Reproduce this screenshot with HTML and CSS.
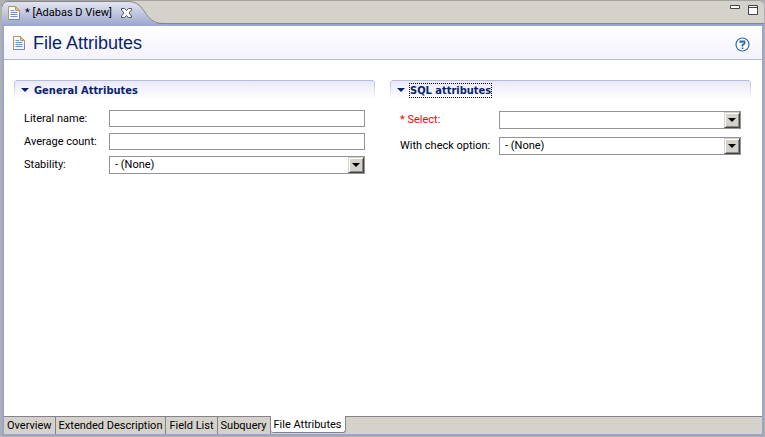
FILE: index.html
```html
<!DOCTYPE html>
<html lang="en">
<head>
<meta charset="utf-8">
<title>Adabas D View</title>
<link rel="stylesheet" href="styles.css">
</head>
<body>
<svg class="defs" aria-hidden="true">
  <symbol id="doc" viewBox="0 0 12 14">
    <path d="M.5.5h7l4 4v9H.5z" fill="#f4f7fd" stroke="#b59a55"/>
    <path d="M7.500.5v4h4z" fill="#e3c988" stroke="#b59a55"/>
    <path d="M2.500 4.500H6M2.500 6.500h7M2.500 8.500h7M2.500 10.500h7" stroke="#6d93c8" fill="none"/>
    <path d="M.5 13.500h11v-6" stroke="#7888ae" fill="none"/>
  </symbol>
  <symbol id="down" viewBox="0 0 8 4">
    <path d="M0 0h8L4 4z" fill="currentColor"/>
  </symbol>
</svg>
<div class="window">
  <header class="titlebar">
    <div class="editor-tab">
      <svg class="tab-shape" viewBox="0 0 163 25" aria-hidden="true">
        <defs>
          <linearGradient id="tabfill" x1="0" y1="0" x2="0" y2="1">
            <stop offset="0" stop-color="#e3e5ef"/>
            <stop offset="1" stop-color="#99a5cb"/>
          </linearGradient>
        </defs>
        <path d="M0 25V6Q1 1 6 1H126C145 1 141 23 161 23H163V25z" fill="url(#tabfill)"/>
        <path d="M0 6Q1 .5 6 .5H126C145 .5 141 22.500 161 22.500" fill="none" stroke="#86868c"/>
      </svg>
      <svg class="doc-icon" aria-hidden="true"><use href="#doc"/></svg>
      <span class="tab-name">* [Adabas D View]</span>
      <button class="icon-button" type="button" aria-label="Close">
        <svg width="11" height="10" viewBox="0 0 11 10"><path d="M.5.5h3l2 2 2-2h3v1.500L8 5l2.500 3v1.500h-3l-2-2-2 2h-3V8L3 5 .5 2z" fill="#fff" stroke="#55555c"/></svg>
      </button>
    </div>
    <div class="window-buttons">
      <button class="icon-button" type="button" aria-label="Minimize">
        <svg width="10" height="4" viewBox="0 0 10 4"><path d="M.5.5h9v3h-9z" fill="#fff" stroke="#444"/></svg>
      </button>
      <button class="icon-button" type="button" aria-label="Maximize">
        <svg width="10" height="10" viewBox="0 0 10 10"><path d="M.5.5h9v9h-9zM.5 2.500h9" fill="#fff" stroke="#444"/></svg>
      </button>
    </div>
  </header>

  <main class="editor">
    <div class="form-head">
      <svg class="doc-icon" aria-hidden="true"><use href="#doc"/></svg>
      <h1>File Attributes</h1>
      <button class="icon-button" type="button" aria-label="Help">
        <svg width="15" height="15" viewBox="0 0 15 15" fill="none" stroke="#2f6b9f"><circle cx="7.500" cy="7.500" r="6.500" fill="#fff" stroke-width="1.200"/><path d="M5.500 6V4.500h4v2L7.500 8v1.500M7.500 10.500v1.500" stroke-width="1.800"/></svg>
      </button>
    </div>

    <div class="sections">
      <section>
        <h2 class="section-head"><svg class="twistie" aria-hidden="true"><use href="#down"/></svg><button type="button" class="section-title">General Attributes</button></h2>
        <div class="fields general">
          <label for="literal">Literal name:</label>
          <input id="literal" type="text">
          <label for="average">Average count:</label>
          <input id="average" type="text">
          <label for="stability">Stability:</label>
          <div class="combo">
            <select id="stability"><option>- (None)</option></select>
            <span class="combo-arrow"><svg aria-hidden="true"><use href="#down"/></svg></span>
          </div>
        </div>
      </section>
      <section>
        <h2 class="section-head"><svg class="twistie" aria-hidden="true"><use href="#down"/></svg><button type="button" class="section-title focused">SQL attributes</button></h2>
        <div class="fields sql">
          <label class="required" for="select">* Select:</label>
          <div class="combo">
            <select id="select"><option></option></select>
            <span class="combo-arrow"><svg aria-hidden="true"><use href="#down"/></svg></span>
          </div>
          <label for="check">With check option:</label>
          <div class="combo">
            <select id="check"><option>- (None)</option></select>
            <span class="combo-arrow"><svg aria-hidden="true"><use href="#down"/></svg></span>
          </div>
        </div>
      </section>
    </div>
  </main>

  <nav class="page-tabs">
    <button type="button">Overview</button>
    <button type="button">Extended Description</button>
    <button type="button">Field List</button>
    <button type="button">Subquery</button>
    <button type="button" class="active">File Attributes</button>
  </nav>
</div>
</body>
</html>
```

FILE: styles.css
```css
* { box-sizing: border-box; }

body {
  margin: 0;
  background: #d5d2cc;
  color: #000;
  font: 11px/14px Roboto, Tahoma, sans-serif;
}

button, input, select { font: inherit; color: inherit; }
button { border: 0; padding: 0; background: none; }
svg { display: block; flex: none; }
.defs { position: absolute; width: 0; height: 0; }

.window {
  display: flex;
  flex-direction: column;
  min-height: 100vh;
  padding: 0 1px 1px 2px;
  background: #b0afb1;
}

.titlebar {
  display: flex;
  justify-content: space-between;
  height: 26px;
  border-top: 1px solid #a5a3a0;
  border-bottom: 2px solid #99a5cb;
  border-radius: 5px 5px 0 0;
  background: #d5d2cc;
  box-shadow: inset 0 -1px #85858b;
}

.editor-tab {
  position: relative;
  display: flex;
  align-items: center;
  gap: 5px;
  padding: 0 0 0 6px;
}
.editor-tab > * { position: relative; }
.editor-tab > .tab-shape {
  position: absolute;
  left: 0;
  top: 0;
  width: 163px;
  height: 25px;
}
.doc-icon { width: 12px; height: 14px; }
.tab-name { white-space: nowrap; }
.editor-tab .icon-button { margin-left: 4px; }

.window-buttons { display: flex; gap: 8px; align-items: flex-start; padding: 4px 6px; }

.editor {
  flex: 1;
  background: #fff;
  border: solid #99a5cb;
  border-width: 0 2px;
}

.form-head {
  display: flex;
  align-items: center;
  gap: 8px;
  height: 34px;
  padding: 0 12px 0 9px;
  border-bottom: 1px solid #b4bbd6;
  background: linear-gradient(#fff, #f4f2fb);
}
.form-head .icon-button { margin: 4px 0 0 auto; }

h1 {
  margin: 0;
  color: #0a246a;
  font: 18px/20px "Liberation Sans", Arial, sans-serif;
}

.sections {
  display: grid;
  grid-template-columns: 1fr 1fr;
  gap: 15px;
  padding: 20px 11px 0 10px;
}

.section-head {
  display: flex;
  align-items: center;
  gap: 5px;
  height: 19px;
  margin: 0;
  padding: 0 7px;
  border-top: 1px solid #b4bbdb;
  border-radius: 4px 4px 0 0;
  background:
    linear-gradient(#b4bbdb, #fff) left / 1px 100% no-repeat,
    linear-gradient(#b4bbdb, #fff) right / 1px 100% no-repeat,
    linear-gradient(#e9e8f8, #fff);
  color: #0a246a;
  font: bold 11px/13px "DejaVu Sans Condensed", Tahoma, sans-serif;
}
.focused { outline: 1px dotted #000; }
.twistie { width: 8px; height: 4px; }

.fields {
  display: grid;
  align-items: center;
  padding: 11px 10px 0;
}
.general { grid-template-columns: 85px 1fr; row-gap: 6px; }
.sql { grid-template-columns: 99px 1fr; row-gap: 8px; padding-top: 12px; }
.fields label { white-space: nowrap; }
.required { color: #f00; }

input, select {
  width: 100%;
  min-width: 0;
  margin: 0;
  border: 1px solid #949494;
  border-radius: 0;
  background: #fff;
}
input { height: 17px; padding: 0 4px; }
select { display: block; height: 18px; padding: 0 20px 1px 5px; appearance: none; }

.combo { position: relative; }
.combo-arrow {
  position: absolute;
  right: 1px;
  top: 1px;
  display: grid;
  place-items: center;
  width: 16px;
  height: 16px;
  border: 1px solid;
  border-color: #d5d2cc #444 #444 #d5d2cc;
  background: #d5d2cc;
  box-shadow: inset 1px 1px #fff, inset -1px -1px #888;
  pointer-events: none;
}
.combo-arrow svg { width: 8px; height: 4px; }

.page-tabs {
  display: flex;
  height: 20px;
  border: solid #99a5cb;
  border-width: 0 2px 2px;
  background: #d5d2cc;
  box-shadow: inset 0 1px #85828a;
}
.page-tabs button {
  height: 18px;
  padding: 1px 3px 0;
  border-right: 1px solid #85828a;
  white-space: nowrap;
}
.page-tabs .active {
  height: 17px;
  background: #fff;
  border-bottom: 1px solid #85828a;
  border-radius: 0 0 3px 3px;
}
```
